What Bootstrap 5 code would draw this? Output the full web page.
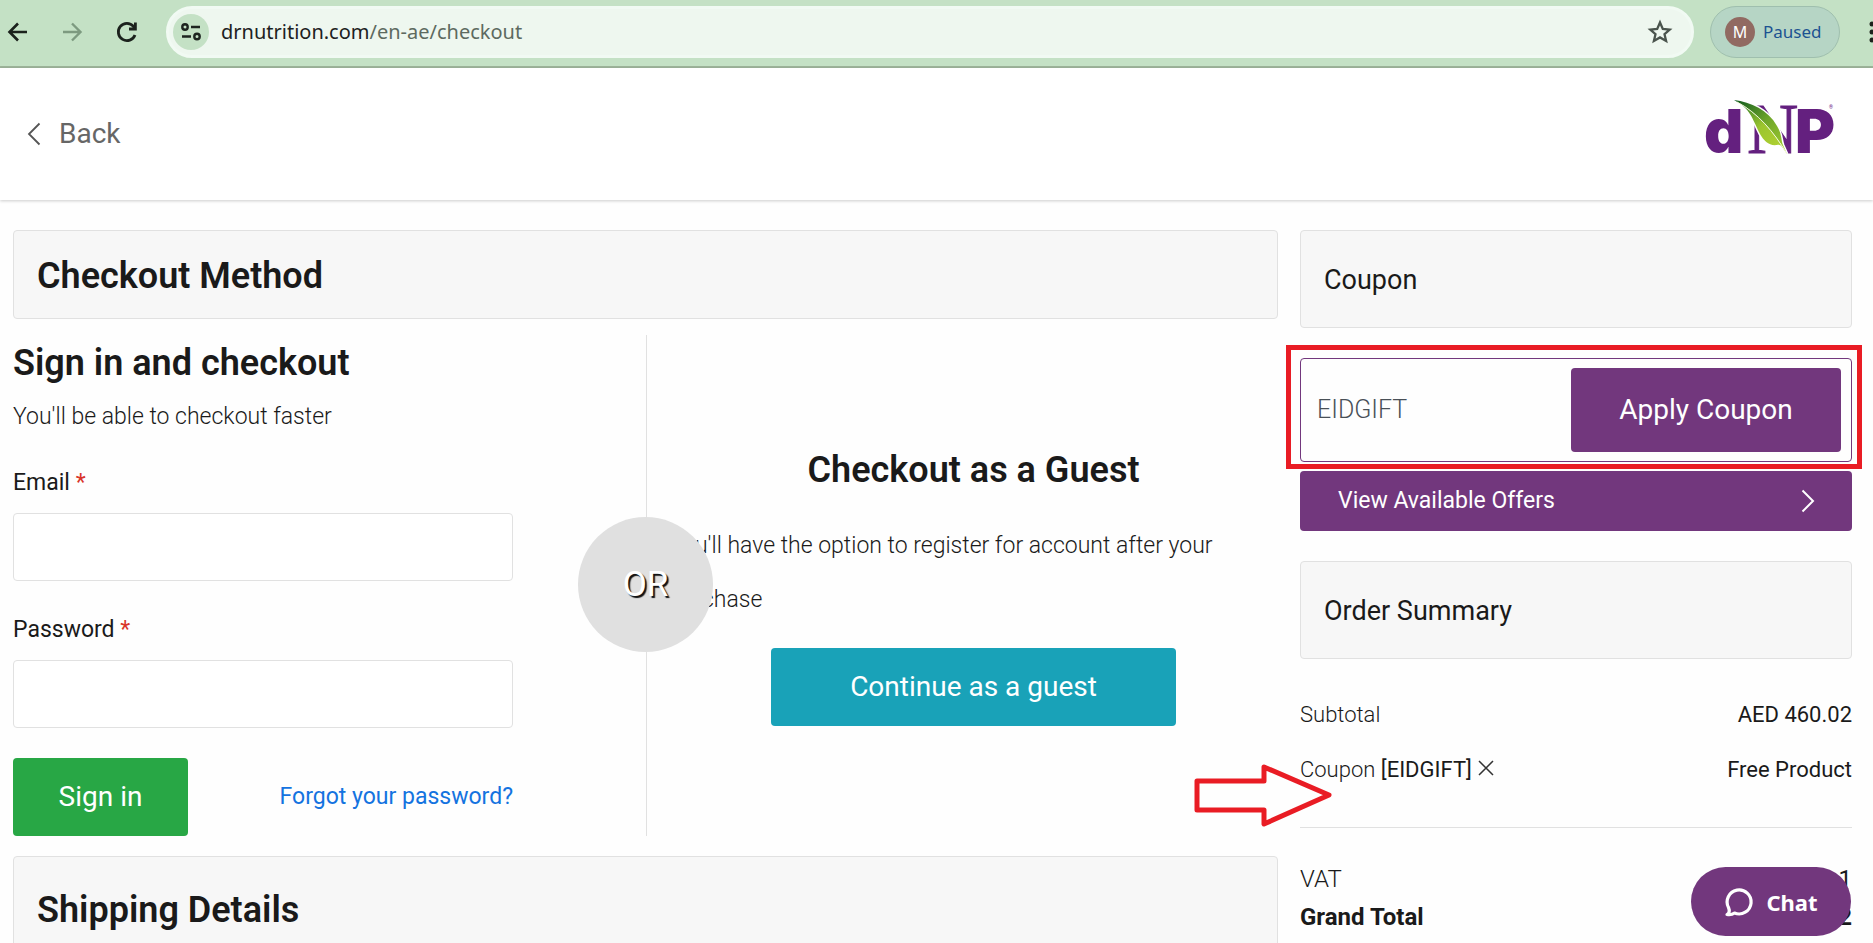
<!DOCTYPE html>
<html lang="en">
<head>
<meta charset="utf-8">
<meta name="viewport" content="width=device-width, initial-scale=1">
<title>Checkout</title>
<link rel="stylesheet" href="https://cdn.jsdelivr.net/npm/bootstrap@5.3.0/dist/css/bootstrap.min.css">
<style>
  :root { --plum: #72377d; --ink: #1a1a1a; --line: #e1e1e1; --mark: #e91c24; }
  body { font-family: Roboto, "Liberation Sans", sans-serif; font-size: 22px; line-height: 32px; color: var(--ink); background: #fefefe; }
  svg { display: block; flex: none; overflow: visible; }

  /* browser toolbar */
  .toolbar { height: 68px; background: #c4e1c5; border-bottom: 2px solid #9db49a; padding: 5px 0 8px 5px; font-family: "Noto Sans", "Open Sans", sans-serif; font-size: 20px; }
  .tool-btn { border: 0; background: none; padding: 0; }
  .omnibox { height: 52px; background: #eef7ef; border: 3px solid #f1faf3; border-radius: 26px; padding: 0 18px 0 4px; margin-left: 25px; }
  .site-info { width: 36px; height: 36px; background: #c4e1c5; }
  .address { color: #5d6a60; line-height: 28px; }
  .address b { font-weight: 400; color: #1d211e; }
  .profile { width: 130px; height: 52px; border: 1px solid #9fbfae; border-radius: 26px; background: #b6d5c5; color: #1c5291; font-size: 17px; padding: 0 14px; }
  .avatar { width: 30px; height: 30px; background: #916a62; color: #fff; font-size: 16px; }
  .kebab { width: 4px; overflow: hidden; margin-left: 29px; }

  /* site header */
  .site-head { height: 132px; background: #fff; box-shadow: 0 1px 3px #0003; padding: 0 38px 0 27px; }
  .back-link { color: #666; font-size: 28px; gap: 18px; }

  .page-body { padding: 30px 21px 0 13px; gap: 22px; }
  .col-side { width: 552px; flex: none; }
  .panel-head { background: #f7f7f7; border: 1px solid var(--line); border-radius: 4px; padding: 2px 0 0 23px; height: 98px; font-size: 27px; font-weight: 400; margin: 0; }
  .title-main { font-size: 36px; line-height: 44px; font-weight: 600; margin: 0; }
  .panel-main { height: 89px; padding-top: 3px; }
  .panel-ship { height: 104px; margin-top: 20px; }
  .thin-copy { font-size: 23px; line-height: 28px; font-weight: 300; }
  .sign-copy { margin: 18px 0 36px; }
  .field-label { font-size: 23px; line-height: 32px; }
  .field-label span { color: #d9352a; }
  .field { height: 68px; border: 1px solid var(--line); border-radius: 4px; font-size: 24px; margin: 14px 0 33px; }
  .login-col { width: 634px; border-right: 1px solid var(--line); margin-top: 16px; height: 501px; padding-top: 6px; }
  .login-form { width: 500px; }
  .sign-row { margin-top: -3px; }
  .btn-tall { height: 78px; font-size: 28px; border-radius: 4px; border: 0; color: #fff; padding: 0; }
  .btn-green { width: 175px; background: #28a745; }
  .btn-teal { width: 405px; background: #19a2b8; }
  .forgot { color: #1473e0; font-size: 23px; }
  .or-disc { left: 565px; top: 198px; width: 135px; height: 135px; background: #e0e0e0; color: #fff; font-size: 35px; text-shadow: 2px 2px 1px #111; z-index: 2; }
  .guest-col { padding: 129px 0 0 22px; }
  .guest-copy { line-height: 54px; padding-right: 40px; margin: 27px 0 21px; }

  .coupon-box { height: 104px; border: 1px solid var(--plum); border-radius: 4px; padding: 9px 10px 9px 0; margin-top: 30px; }
  .coupon-box .form-control { border: 0; padding: 0 16px; font-size: 25px; font-weight: 300; color: #495057; background: none; }
  .btn-plum { background: var(--plum); width: 270px; height: 84px; flex: none; }
  .callout { left: -15px; right: -11px; top: -14px; bottom: -8px; border: 5px solid var(--mark); pointer-events: none; }
  .offers { background: var(--plum); height: 60px; border: 0; border-radius: 4px; color: #fff; font-size: 23px; margin: 9px 0 30px; padding: 0 37px 0 38px; }
  .sums { margin-top: 28px; }
  .sums th, .sums td { font-weight: 400; padding: 12px 0 11px; }
  .sums td { text-align: right; }
  .sums-total { margin-top: 32px; font-size: 24px; }
  .sums-total th, .sums-total td { padding: 3px 0; }
  .sums .soft { font-weight: 300; }
  .rule { border-top: 1px solid var(--line); margin-top: 30px; }
  .arrow { left: -106px; top: 76px; z-index: 3; }
  .chat { right: 22px; bottom: 7px; width: 160px; height: 69px; border: 0; border-radius: 35px; background: var(--plum); color: #fff; font: 700 22px "Noto Sans", sans-serif; gap: 12px; z-index: 5; }
</style>
</head>
<body class="vh-100 overflow-hidden">

<nav class="toolbar d-flex align-items-center" aria-label="Browser">
  <button class="tool-btn" aria-label="Go back"><svg width="26" height="26" viewBox="0 0 26 26" fill="none" stroke="#1b211c" stroke-width="2.6"><path d="M22 13H5M13 4.500 4.500 13 13 21.500"/></svg></button>
  <button class="tool-btn ms-4 ps-1" aria-label="Go forward"><svg width="26" height="26" viewBox="0 0 26 26" fill="none" stroke="#7d9a80" stroke-width="2.4"><path d="M4 13h17M13 4.500 21.500 13 13 21.500"/></svg></button>
  <button class="tool-btn ms-4 ps-1" aria-label="Reload"><svg width="28" height="28" viewBox="0 0 28 28" fill="none" stroke="#1b211c" stroke-width="2.800"><path d="M22 17a8.600 8.600 0 1 1-1.500-8.600L22 10M22.400 4.500V11H16"/></svg></button>
  <div class="omnibox d-flex align-items-center flex-grow-1">
    <button class="tool-btn site-info rounded-circle d-flex align-items-center justify-content-center" aria-label="Site information"><svg width="22" height="20" viewBox="0 0 22 20" fill="none" stroke="#1d241f" stroke-width="2.400"><circle cx="5" cy="5" r="2.700"/><path d="M11 5h9M2 14.500h9"/><circle cx="17" cy="14.500" r="2.700"/></svg></button>
    <span class="address flex-grow-1 ms-2 ps-1"><b>drnutrition.com</b>/en-ae/checkout</span>
    <button class="tool-btn" aria-label="Bookmark"><svg width="26" height="26" viewBox="0 0 26 26" fill="none" stroke="#4a544d" stroke-width="2.300"><path d="M13 3.500 15.800 10 22.700 10.600 17.500 15.200 19.100 22 13 18.400 6.900 22 8.500 15.200 3.300 10.600 10.200 10Z"/></svg></button>
  </div>
  <button class="profile d-flex align-items-center gap-2 ms-3"><span class="avatar rounded-circle d-flex align-items-center justify-content-center">M</span>Paused</button>
  <button class="tool-btn kebab" aria-label="Menu"><svg width="6" height="24" viewBox="0 0 6 24" fill="#1b211c"><circle cx="3" cy="4" r="2.500"/><circle cx="3" cy="12" r="2.500"/><circle cx="3" cy="20" r="2.500"/></svg></button>
</nav>

<header class="site-head d-flex align-items-center justify-content-between">
  <a href="#" class="back-link d-flex align-items-center text-decoration-none"><svg width="14" height="24" viewBox="0 0 14 24" fill="none" stroke="#555" stroke-width="1.800"><path d="M12.500 1.500 2 12 12.500 22.500"/></svg>Back</a>
  <a href="#" aria-label="dNP home" class="text-decoration-none pb-3"><svg width="130" height="56" viewBox="0 0 130 56">
    <defs>
      <linearGradient id="leafA" x1="0" y1="0" x2="1" y2="1"><stop offset="0" stop-color="#0f5a20"/><stop offset=".5" stop-color="#6fa62a"/><stop offset="1" stop-color="#a5cf2f"/></linearGradient>
      <linearGradient id="leafB" x1="0" y1="0" x2="1" y2="1"><stop offset="0" stop-color="#17692a"/><stop offset=".5" stop-color="#9cc52f"/><stop offset="1" stop-color="#b5d433"/></linearGradient>
    </defs>
    <g fill="#64207f">
      <text x="-1" y="55" font-family="Inter, sans-serif" font-weight="900" font-size="61">d</text>
      <text x="42" y="55" font-family="Liberation Serif, serif" font-size="71" stroke="#64207f">N</text>
      <text x="90" y="55" font-family="Inter, sans-serif" font-weight="900" font-size="61">P</text>
      <text x="124" y="11" font-family="Roboto, sans-serif" font-size="5">®</text>
    </g>
    <path d="M29 2C46 4 63 12 72 28 77 36 76 42 78 47L82 56C77 49 76 46 72 47 64 48 59 43 55 36 47 20 45 10 29 2Z" fill="#fff" stroke="#fff" stroke-width="3"/>
    <path d="M29 2C46 4 63 12 72 28 77 36 76 42 78 47L82 56C69 34 53 15 29 2Z" fill="url(#leafA)"/>
    <path d="M29 2C53 15 69 34 82 56 77 49 76 46 72 47 64 48 59 43 55 36 47 20 45 10 29 2Z" fill="url(#leafB)"/>
    <path d="M32 4C53 15 69 34 82 56" fill="none" stroke="#f3f9dc" stroke-width="1"/>
  </svg></a>
</header>

<main class="page-body d-flex">
  <div class="flex-grow-1">
    <div class="panel-head panel-main d-flex align-items-center"><h2 class="title-main">Checkout Method</h2></div>

    <div class="d-flex position-relative">
      <section class="login-col flex-shrink-0">
        <form class="login-form">
          <h2 class="title-main">Sign in and checkout</h2>
          <p class="thin-copy sign-copy">You'll be able to checkout faster</p>
          <label class="field-label d-block" for="email">Email <span>*</span></label>
          <input class="form-control field" id="email" type="email">
          <label class="field-label d-block" for="pass">Password <span>*</span></label>
          <input class="form-control field" id="pass" type="password">
          <div class="sign-row d-flex align-items-center justify-content-between">
            <button class="btn btn-tall btn-green" type="button">Sign in</button>
            <a href="#" class="forgot text-decoration-none">Forgot your password?</a>
          </div>
        </form>
      </section>
      <span class="or-disc position-absolute rounded-circle d-flex align-items-center justify-content-center">OR</span>
      <section class="guest-col flex-grow-1 text-center">
        <h2 class="title-main">Checkout as a Guest</h2>
        <p class="thin-copy guest-copy text-start">You'll have the option to register for account after your purchase</p>
        <button class="btn btn-tall btn-teal" type="button">Continue as a guest</button>
      </section>
    </div>

    <div class="panel-head panel-main panel-ship d-flex align-items-center"><h2 class="title-main">Shipping Details</h2></div>
  </div>

  <aside class="col-side">
    <h3 class="panel-head d-flex align-items-center">Coupon</h3>
    <form class="coupon-box d-flex align-items-center position-relative">
      <input class="form-control" type="text" value="EIDGIFT" aria-label="Coupon code">
      <button class="btn btn-tall btn-plum" type="button">Apply Coupon</button>
      <span class="callout position-absolute"></span>
    </form>
    <button class="offers w-100 d-flex align-items-center justify-content-between">View Available Offers
      <svg width="14" height="24" viewBox="0 0 14 24" fill="none" stroke="#fff" stroke-width="2"><path d="M1.500 1.500 12 12 1.500 22.500"/></svg></button>
    <h3 class="panel-head d-flex align-items-center">Order Summary</h3>

    <div class="position-relative">
      <table class="sums w-100">
        <tr><th class="soft" scope="row">Subtotal</th><td>AED 460.02</td></tr>
        <tr><th scope="row"><span class="soft">Coupon</span> [EIDGIFT] <button class="tool-btn" type="button" aria-label="Remove coupon"><svg width="18" height="18" viewBox="0 0 18 18" stroke="#333" stroke-width="1.500"><path d="M2 2l14 14M16 2 2 16"/></svg></button></th><td>Free Product</td></tr>
      </table>
      <div class="rule"></div>
      <table class="sums sums-total w-100">
        <tr><th class="soft" scope="row">VAT</th><td>1</td></tr>
        <tr><th class="fw-bold" scope="row">Grand Total</th><td class="fw-bold">2</td></tr>
      </table>
      <svg class="arrow position-absolute" width="140" height="66" viewBox="0 0 140 66" fill="none" stroke="#e91c24" stroke-width="5" stroke-linejoin="round"><path d="M3 18H70V4L135 32 70 61V47H3Z"/></svg>
    </div>
  </aside>
</main>

<button class="chat position-fixed d-flex align-items-center justify-content-center"><svg width="30" height="32" viewBox="0 0 30 32" fill="none" stroke="#fff" stroke-width="3.200" stroke-linejoin="round"><path d="M3 28.500C5.500 27 6 25 4.500 21.500A12 12 0 1 1 10.500 27C8.500 28.500 6 29 3 28.500Z"/></svg>Chat</button>

<script src="https://cdn.jsdelivr.net/npm/bootstrap@5.3.0/dist/js/bootstrap.bundle.min.js"></script>
</body>
</html>
